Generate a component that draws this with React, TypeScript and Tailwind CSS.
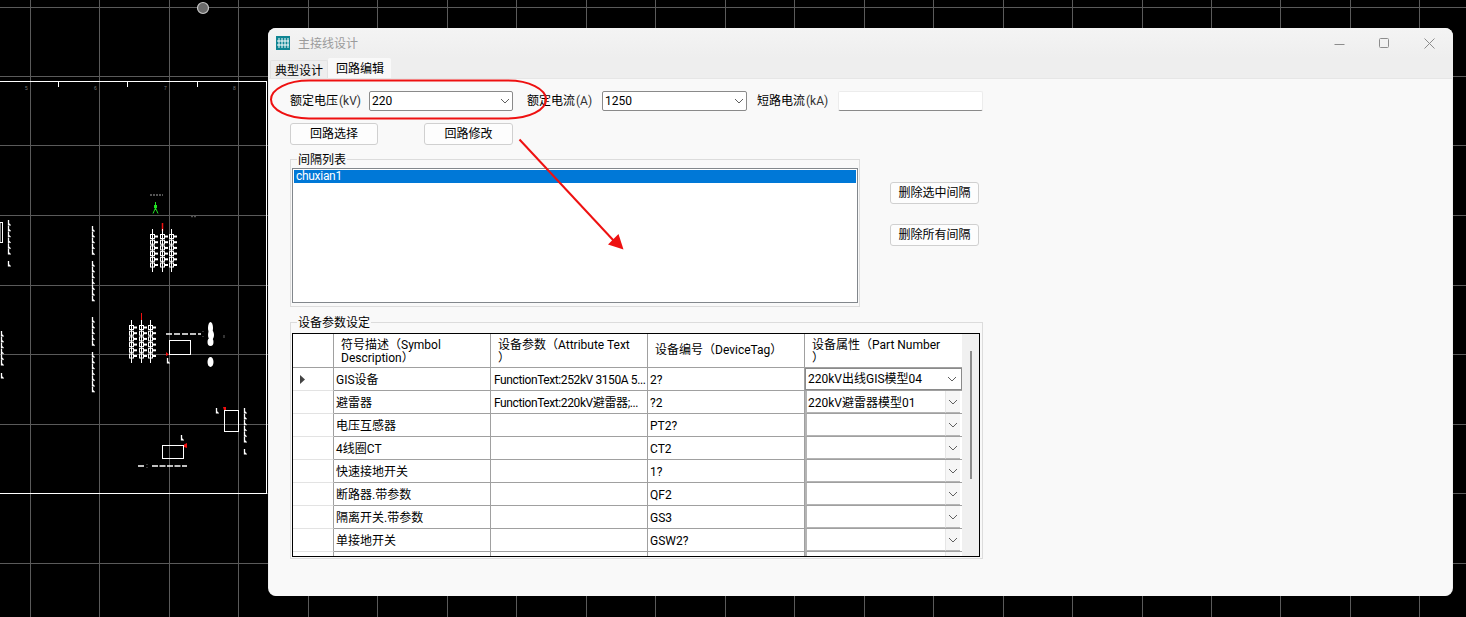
const gridX = Array.from({ length: 21 }, (_, i) => 30.5 + Math.round(i * 69.47))
const gridY = [7.5, 76.5, 145.5, 215.5, 285.5, 354.5, 424.5, 493.5, 563.5]

const rows = [
  { name: 'GIS设备', attr: 'FunctionText:252kV 3150A 5...', tag: '2?', part: '220kV出线GIS模型04', active: true },
  { name: '避雷器', attr: 'FunctionText:220kV避雷器;...', tag: '?2', part: '220kV避雷器模型01' },
  { name: '电压互感器', attr: '', tag: 'PT2?', part: '' },
  { name: '4线圈CT', attr: '', tag: 'CT2', part: '' },
  { name: '快速接地开关', attr: '', tag: '1?', part: '' },
  { name: '断路器.带参数', attr: '', tag: 'QF2', part: '' },
  { name: '隔离开关.带参数', attr: '', tag: 'GS3', part: '' },
  { name: '单接地开关', attr: '', tag: 'GSW2?', part: '' },
  { name: '', attr: '', tag: '', part: '' },
]

function Chevron() {
  return (
    <svg width="10" height="6" viewBox="0 0 10 6" className="shrink-0">
      <path d="M1 1l4 4 4-4" fill="none" stroke="#606060" strokeWidth="1" />
    </svg>
  )
}

function Combo({ value, width }: { value: string; width: string }) {
  return (
    <div className={`flex h-[20px] items-center justify-between rounded-[2px] border border-[#8a8a8a] bg-white pl-[2px] pr-[2px] ${width}`}>
      <span>{value}</span>
      <Chevron />
    </div>
  )
}

function Btn({ label, width, className = '' }: { label: string; width: string; className?: string }) {
  return (
    <button className={`flex h-[22px] items-center justify-center rounded-[3px] border border-[#d0d0d0] bg-[#fdfdfd] ${width} ${className}`}>
      {label}
    </button>
  )
}

function Label({ cn, unit, width }: { cn: string; unit: string; width: string }) {
  return (
    <div className={`whitespace-nowrap ${width}`}>
      {cn}
      <span className="ml-[1px] text-[#333]">{unit}</span>
    </div>
  )
}

function HeaderCell({ children, last }: { children: React.ReactNode; last?: boolean }) {
  return (
    <div className={`flex items-center border-b border-[#a0a0a0] bg-white leading-[13px] ${last ? '' : 'border-r'}`}>
      {children}
    </div>
  )
}

// little "b" shaped tag marks that repeat on the drawing
function Marks({ x, y, n, step = 5.8 }: { x: number; y: number; n: number; step?: number }) {
  return (
    <>
      {Array.from({ length: n }, (_, i) => (
        <path key={i} d={`M${x + 0.5} ${y + i * step}v5.500M${x + 0.5} ${y + i * step + 3.5}l2 2`} fill="none" stroke="#fff" strokeWidth="1.300" />
      ))}
    </>
  )
}

function Coils({ x, y }: { x: number; y: number }) {
  return (
    <>
      {[0, 10, 19].map((dx) => (
        <g key={dx}>
          <path d={`M${x + dx + 2.500} ${y}v43`} stroke="#fff" strokeWidth="1" />
          {[0, 1, 2, 3, 4, 5].map((i) => (
            <g key={i}>
              <rect x={x + dx + 0.500} y={y + 5.500 + i * 5.700} width="4" height="4" fill="none" stroke="#fff" />
              <rect x={x + dx + 5} y={y + 6.500 + i * 5.700} width="3" height="2" fill="#fff" />
            </g>
          ))}
        </g>
      ))}
    </>
  )
}

function CadDrawing() {
  return (
    <svg className="absolute inset-0" width="1466" height="617" viewBox="0 0 1466 617">
      {gridX.map((x) => (
        <path key={x} d={`M${x} 0V617`} stroke="#5a5a5a" strokeWidth="1" />
      ))}
      {gridY.map((y) => (
        <path key={y} d={`M0 ${y}H1466`} stroke="#5a5a5a" strokeWidth="1" />
      ))}
      <circle cx="203" cy="8" r="5.500" fill="#6b6b6b" stroke="#c8c8c8" strokeWidth="1.200" />
      <path d="M0 81.500H267M266.500 81V493M0 493.500H267" fill="none" stroke="#fff" strokeWidth="1" />
      {[58.500, 127.500, 197.500].map((x) => (
        <path key={x} d={`M${x} 82v5`} stroke="#fff" strokeWidth="1" />
      ))}
      {[
        [25, '5'],
        [94, '6'],
        [164, '7'],
        [233, '8'],
      ].map(([x, t]) => (
        <text key={t} x={x} y="90" fontSize="5" fill="#777" fontFamily="Liberation Sans">
          {t}
        </text>
      ))}

      <path d="M155.500 202v8M155.500 208l-2.500 5.500M155.500 208l2.500 5.500" fill="none" stroke="#22e022" strokeWidth="1" />
      <rect x="154" y="205" width="3" height="3" fill="#22e022" />
      <path d="M150 195h13" stroke="#555" strokeWidth="2" strokeDasharray="2 1" />
      <path d="M191 216.500h5" stroke="#555" strokeWidth="1.500" strokeDasharray="2 1" />

      <path d="M162.500 223v8" stroke="#f01010" strokeWidth="1.500" />
      <path d="M141.500 313v8" stroke="#f01010" strokeWidth="1" />
      <Coils x={150} y={229} />
      <Coils x={129} y={320} />

      <rect x="0" y="222.500" width="2.500" height="20" fill="none" stroke="#fff" />
      <Marks x={8} y={220} n={6} />
      <Marks x={8} y={261} n={1} />
      <Marks x={92} y={226} n={5} />
      <Marks x={92} y={261} n={7} />
      <Marks x={92} y={317} n={5} />
      <Marks x={92} y={352} n={7} />
      <Marks x={1} y={331} n={6} />
      <Marks x={1} y={373} n={1} />
      <Marks x={167} y={358} n={1} />
      <Marks x={216} y={408} n={1} />
      <Marks x={181} y={435} n={1} />
      <Marks x={244} y={408} n={6} />
      <Marks x={244} y={449} n={1} />

      <path d="M166 334h35" stroke="#fff" strokeWidth="1.500" strokeDasharray="6 2" />
      <path d="M138 466h7M152 466h35" stroke="#fff" strokeWidth="1.500" strokeDasharray="6 1.500" />
      <rect x="169.500" y="340.500" width="21" height="14" fill="none" stroke="#fff" />
      <rect x="224.500" y="410.500" width="14" height="21" fill="none" stroke="#fff" />
      <rect x="162.500" y="445.500" width="21" height="13" fill="none" stroke="#fff" />
      <path d="M166 352l3 2.500-3 1.500z" fill="#f01010" />
      <path d="M223 407h3v3h-2z" fill="#f01010" />
      <path d="M184 444.500l3-1.500v5l-3-1z" fill="#f01010" />
      <ellipse cx="210.500" cy="328" rx="2.500" ry="6" fill="#fff" />
      <ellipse cx="211" cy="335" rx="3" ry="5" fill="#fff" />
      <ellipse cx="210.500" cy="342" rx="3" ry="4" fill="#fff" />
      <ellipse cx="210.500" cy="362" rx="3" ry="5" fill="#fff" />
      <path d="M203 331v1M203 336v1M224 335v3M147 464v1M147 467v1" stroke="#666" strokeWidth="1" />
    </svg>
  )
}

export default function App() {
  return (
    <div className="relative h-[617px] w-[1466px] overflow-hidden bg-black font-['Roboto','Noto_Sans_CJK_SC',sans-serif] text-[12px] leading-[14px] text-black">
      <CadDrawing />

      <div className="absolute left-[268px] top-[28px] flex h-[568px] w-[1185px] flex-col overflow-hidden rounded-lg bg-[#eeeeee]">
        <div className="flex h-[30px] items-center bg-gradient-to-b from-[#f4f4f4] to-[#eeeeee] pl-[8px]">
          <svg width="14" height="14" viewBox="0 0 14 14">
            <rect width="14" height="14" fill="#0f8593" />
            <path d="M3 2v10M6 2v10M9 2v10M12 2v10M1 5h12M1 9h12" stroke="#fff" strokeWidth="1" />
          </svg>
          <span className="ml-[8px] pt-[1px] text-[#9b9b9b]">主接线设计</span>
          <div className="ml-auto flex items-center pr-[18px]">
            <svg width="11" height="11" viewBox="0 0 11 11">
              <path d="M0.500 6.500h10" stroke="#8c8c8c" />
            </svg>
            <svg width="10" height="10" viewBox="0 0 10 10" className="ml-[34px]">
              <rect x="0.500" y="0.500" width="9" height="9" rx="1" fill="none" stroke="#8c8c8c" />
            </svg>
            <svg width="11" height="11" viewBox="0 0 11 11" className="ml-[35px]">
              <path d="M0.500 0.500l10 10M10.500 0.500l-10 10" stroke="#8c8c8c" />
            </svg>
          </div>
        </div>

        <div className="flex h-[20px] items-end pl-[2px]">
          <div className="flex h-[18px] w-[58px] items-center justify-center rounded-t-[2px] border border-b-0 border-[#e2e2e2] pt-[3px]">典型设计</div>
          <div className="flex h-[20px] w-[63px] items-center justify-center rounded-t-[2px] bg-[#f9f9f9] pl-[1px] pt-[2px]">回路编辑</div>
        </div>

        <div className="mx-[1px] flex-1 rounded-b-lg border-t border-[#e6e6e6] bg-[#f9f9f9] pl-[21px] pt-[12px]">
          <div className="flex h-[20px] items-center">
            <Label cn="额定电压" unit="(kV)" width="w-[79px]" />
            <Combo value="220" width="w-[144px]" />
            <Label cn="额定电流" unit="(A)" width="ml-[14px] w-[75px]" />
            <Combo value="1250" width="w-[145px]" />
            <Label cn="短路电流" unit="(kA)" width="ml-[10px] w-[81px]" />
            <div className="h-[20px] w-[145px] rounded-[2px] border border-[#ececec] border-b-[#8a8a8a] bg-white" />
          </div>

          <div className="mt-[12px] flex">
            <Btn label="回路选择" width="w-[88px]" />
            <Btn label="回路修改" width="w-[89px]" className="ml-[46px]" />
          </div>

          <div className="mt-[7px] flex">
            <fieldset className="h-[155px] w-[570px] border border-[#dcdcdc] px-[1px]">
              <legend className="ml-[5px] translate-y-[1px] px-[1px] leading-[14px]">间隔列表</legend>
              <div className="mt-[2px] h-[135px] w-[566px] border border-[#82878c] bg-white p-[1px]">
                <div className="h-[13px] bg-[#0078d7] pl-[2px] leading-[13px] tracking-[-0.3px] text-white">chuxian1</div>
              </div>
            </fieldset>
            <div className="ml-[30px] flex flex-col gap-[20px] pt-[30px]">
              <Btn label="删除选中间隔" width="w-[89px]" />
              <Btn label="删除所有间隔" width="w-[89px]" />
            </div>
          </div>

          <fieldset className="mt-[8px] h-[244px] w-[693px] border border-[#dcdcdc] pl-[1px]">
            <legend className="ml-[5px] translate-y-[1px] px-[1px] leading-[14px]">设备参数设定</legend>
            <div className="mt-[4px] flex h-[224px] w-[688px] overflow-hidden border border-black bg-[#f0f0f0]">
              <div className="h-full w-[669px] shrink-0 overflow-hidden">
                <div className="grid auto-rows-[23px] grid-cols-[41px_157px_157px_157px_157px] grid-rows-[34px]">
                  <HeaderCell>{null}</HeaderCell>
                  <HeaderCell>
                    <span className="pl-[7px] pt-[2px]">
                      符号描述（Symbol
                      <br />
                      Description）
                    </span>
                  </HeaderCell>
                  <HeaderCell>
                    <span className="pl-[7px] pt-[2px]">
                      设备参数（Attribute Text
                      <br />）
                    </span>
                  </HeaderCell>
                  <HeaderCell>
                    <span className="whitespace-nowrap pl-[7px]">设备编号（DeviceTag）</span>
                  </HeaderCell>
                  <HeaderCell last>
                    <span className="pl-[7px] pt-[2px]">
                      设备属性（Part Number
                      <br />）
                    </span>
                  </HeaderCell>

                  {rows.map((r, i) => (
                    <div key={i} className="contents">
                      <div className="flex items-center border-b border-r border-b-[#e3e3e3] border-r-[#a0a0a0] bg-white pl-[7px]">
                        {r.active && (
                          <svg width="5" height="9" viewBox="0 0 5 9">
                            <path d="M0 0l5 4.500-5 4.500z" fill="#444" />
                          </svg>
                        )}
                      </div>
                      <div className="flex items-center border-b border-r border-[#a0a0a0] bg-white pl-[2px] pt-[2px]">{r.name}</div>
                      <div className="flex items-center overflow-hidden whitespace-nowrap border-b border-r border-[#a0a0a0] bg-white pl-[3px] pt-[2px] tracking-[-0.4px]">{r.attr}</div>
                      <div className="flex items-center border-b border-r border-[#a0a0a0] bg-white pl-[2px] pt-[2px]">{r.tag}</div>
                      {r.active ? (
                        <div className="border-b border-[#a0a0a0] bg-white">
                          <div className="flex h-[22px] items-center justify-between border border-[#8a8a8a] pl-[2px] pr-[4px]">
                            <span>{r.part}</span>
                            <Chevron />
                          </div>
                        </div>
                      ) : (
                        <div className="flex border-b border-l-2 border-b-[#a0a0a0] border-l-[#b4b4b4] bg-white pr-[2px]">
                          <div className="flex flex-1 items-center border-b border-[#b4b4b4] pl-[1px] pt-[2px]">{r.part}</div>
                          <div className="flex w-[15px] items-center justify-center border-b border-l border-b-[#b4b4b4] border-l-[#e6e6e6] bg-[#f6f6f6]">
                            <Chevron />
                          </div>
                        </div>
                      )}
                    </div>
                  ))}
                </div>
              </div>
              <div className="flex-1 pl-[8px] pt-[17px]">
                <div className="h-[128px] w-[2px] bg-[#8c8c8c]" />
              </div>
            </div>
          </fieldset>
        </div>
      </div>

      {/* red markup drawn over the window */}
      <svg className="absolute inset-0" width="1466" height="617" viewBox="0 0 1466 617">
        <rect x="271" y="80.500" width="275" height="38" rx="38" ry="19" fill="none" stroke="#ee1111" strokeWidth="2" />
        <path d="M519.500 139.500L614 241" stroke="#ee1111" strokeWidth="2" />
        <path d="M623.500 249.500L608 244.500L618.500 234z" fill="#ee1111" />
      </svg>
    </div>
  )
}
